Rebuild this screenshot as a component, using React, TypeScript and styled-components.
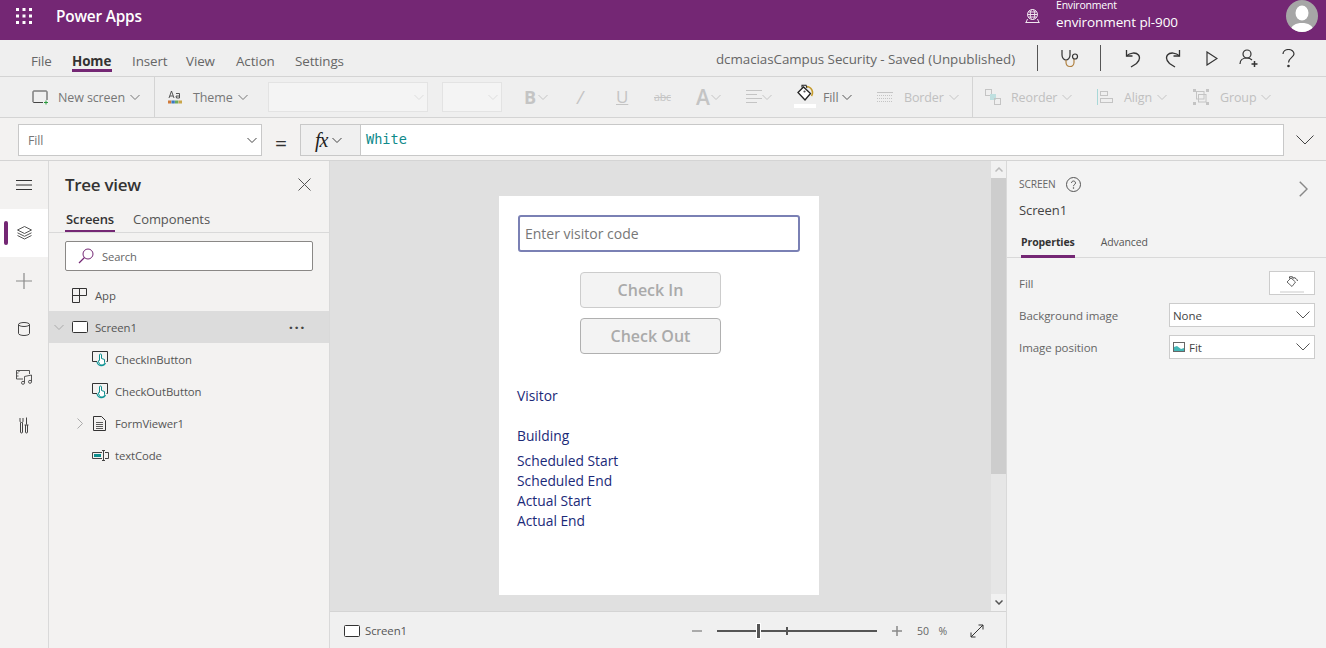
import React from "react";
import styled, { createGlobalStyle } from "styled-components";

const Global = createGlobalStyle`
  html, body { margin: 0; padding: 0; width: 1326px; height: 648px; overflow: hidden; background: #f3f2f1; }
  * { box-sizing: border-box; }
  body { font-family: "Open Sans", "Noto Sans", sans-serif; color: #333; }
`;

const Page = styled.div`
  width: 1326px; height: 648px; display: flex; flex-direction: column; overflow: hidden; letter-spacing: -0.1px;
`;
const Header = styled.header`
  height: 40px; flex: none; background: #742774; color: #fff; display: flex; align-items: center; padding: 0 0 8px 16px;
`;
const Brand = styled.div`
  font-size: 15.4px; font-weight: 600; margin-left: 24px; letter-spacing: -0.2px;
`;
const EnvBlock = styled.div`
  margin-left: auto; display: flex; align-items: center; height: 32px;
`;
const EnvText = styled.div`
  margin-left: 15px; width: 230px; display: flex; flex-direction: column; height: 32px; padding-top: 1px;
`;
const EnvLabel = styled.span`
  font-size: 10.5px; line-height: 9px; letter-spacing: -0.2px;
`;
const EnvName = styled.span`
  font-size: 13.5px; line-height: 18px; margin-top: 3px; letter-spacing: -0.1px;
`;
const Avatar = styled.div`
  width: 32px; height: 32px; border-radius: 50%; background: #a6a6a6; overflow: hidden; margin-right: 8px;
`;
const MenuRow = styled.nav`
  height: 37px; flex: none; background: #efefef; border-bottom: 1px solid #d4d4d4; display: flex; align-items: center; padding-left: 31px;
`;
const MenuTab = styled.span<{ $active?: boolean; $w: number }>`
  width: ${p => p.$w}px; font-size: 13.4px; line-height: 18px; position: relative; flex: none;
  font-weight: ${p => (p.$active ? 700 : 400)};
  color: ${p => (p.$active ? "#333" : "#666")};
  margin-top: 6px;
  ${p => p.$active && `&::after { content: ""; position: absolute; left: 0; width: 40px; top: 17px; height: 3px; background: #742774; }`}
`;
const DocTitle = styled.span`
  margin-left: auto; font-size: 13.35px; color: #666; width: 300px; letter-spacing: -0.04px; white-space: nowrap; margin-top: 1px;
`;
const MenuIcons = styled.div`
  display: flex; align-items: center; height: 26px; width: 310px;
`;
const VBar = styled.span<{ $ml: number }>`
  width: 1px; height: 26px; background: #555; margin-left: ${p => p.$ml}px; flex: none;
`;
const IconSlot = styled.span<{ $ml: number }>`
  margin-left: ${p => p.$ml}px; display: inline-flex; flex: none;
`;
const Toolbar = styled.div`
  height: 41px; flex: none; background: #efefef; border-bottom: 1px solid #d4d4d4; display: flex; align-items: center; padding: 0 0 0 32px;
`;
const ToolItem = styled.div<{ $w: number; $ml?: number; $dim?: boolean }>`
  width: ${p => p.$w}px; margin-left: ${p => p.$ml ?? 0}px; flex: none; display: flex; align-items: center;
  font-size: 12.5px; height: 24px; color: ${p => (p.$dim ? "#c0c0c0" : "#777")};
  letter-spacing: -0.12px; white-space: nowrap;
`;
const ToolLabel = styled.span<{ $ml: number }>`
  margin-left: ${p => p.$ml}px;
`;
const ToolSep = styled.span<{ $ml?: number }>`
  width: 1px; height: 40px; background: #d4d4d4; flex: none; margin-left: ${p => p.$ml ?? 0}px;
`;
const DisabledSelect = styled.div<{ $w: number; $ml: number }>`
  width: ${p => p.$w}px; height: 30px; margin-left: ${p => p.$ml}px; flex: none; background: #f4f4f4; border: 1px solid #e3e3e3;
  display: flex; align-items: center; justify-content: flex-end; padding-right: 3px;
`;
const FillStack = styled.span`
  width: 22px; margin-left: -4px; flex: none; display: flex; flex-direction: column; align-items: center; height: 26px; gap: 2px;
`;
const FillBar = styled.span`
  width: 22px; height: 4px; background: #fff; flex: none;
`;
const FormulaBar = styled.div`
  height: 43px; flex: none; background: #f3f2f1; border-bottom: 1px solid #d4d4d4; display: flex; align-items: flex-start; padding: 6px 0 0 18px;
`;
const PropSelect = styled.div`
  width: 244px; height: 32px; background: #fff; border: 1px solid #c8c8c8; display: flex; align-items: center; padding: 0 4px 0 9px; justify-content: space-between;
  font-size: 12.4px; color: #777;
`;
const EqualSign = styled.span`
  width: 38px; flex: none; font-size: 21px; line-height: 32px; color: #333; text-align: center; padding-top: 3px;
`;
const FxBox = styled.div`
  width: 61px; height: 32px; flex: none; border: 1px solid #c8c8c8; background: #f0f0f0; display: flex; align-items: center; padding-left: 14px; gap: 5px;
`;
const FxText = styled.span`
  font-family: "Liberation Serif", serif; font-style: italic; font-size: 20px; color: #222; line-height: 24px; letter-spacing: -1px;
`;
const FormulaInput = styled.div`
  width: 923px; height: 32px; flex: none; background: #fff; border: 1px solid #c8c8c8; border-left: none; display: flex; align-items: center; padding: 0 0 2px 5px;
  font-family: "DejaVu Sans Mono", "Liberation Mono", monospace; font-size: 13.6px; color: #0e8a8a; letter-spacing: 0;
`;
const Expand = styled.span`
  margin-left: 12px; margin-top: 11px; display: inline-flex;
`;
const Main = styled.div`
  flex: 1; min-height: 0; display: flex; background: #f3f2f1;
`;
const Rail = styled.aside`
  width: 49px; flex: none; border-right: 1px solid #d9d9d9; display: flex; flex-direction: column;
`;
const RailBtn = styled.div<{ $active?: boolean; $h: number }>`
  height: ${p => p.$h}px; display: flex; align-items: center; justify-content: center; position: relative; flex: none;
  ${p => p.$active && `background: #fff; &::before { content: ""; position: absolute; left: 4px; top: 12px; width: 4px; height: 24px; border-radius: 2px; background: #742774; }`}
`;
const TreePanel = styled.section`
  width: 280px; flex: none; display: flex; flex-direction: column; background: #f3f2f1;
`;
const TreeHead = styled.div`
  height: 47px; padding: 0 18px 0 16px; display: flex; align-items: center; justify-content: space-between; flex: none;
`;
const TreeTitle = styled.h2`
  margin: 0; font-size: 17px; font-weight: 600; color: #333; letter-spacing: -0.3px;
`;
const TabStrip = styled.div`
  height: 25px; flex: none; border-bottom: 1px solid #d9d9d9; display: flex; padding-left: 16px; gap: 17px;
`;
const TreeTab = styled.span<{ $active?: boolean }>`
  font-size: 13px; line-height: 22px; height: 24px; padding: 0 1px; color: ${p => (p.$active ? "#333" : "#555")}; font-weight: ${p => (p.$active ? 600 : 400)};
  border-bottom: ${p => (p.$active ? "2px solid #742774" : "none")}; letter-spacing: -0.1px;
`;
const SearchBox = styled.div`
  width: 248px; height: 30px; margin: 8px 0 8px 16px; flex: none; background: #fff; border: 1px solid #8a8886; border-radius: 2px; display: flex; align-items: center; padding-left: 12px; gap: 8px;
  font-size: 11.2px; color: #666;
`;
const TreeRow = styled.div<{ $sel?: boolean; $pad: number }>`
  height: 32px; flex: none; display: flex; align-items: center; padding-left: ${p => p.$pad}px; font-size: 11.35px; color: #555; background: ${p => (p.$sel ? "#dcdcdc" : "transparent")}; letter-spacing: -0.1px;
`;
const RowGlyph = styled.span<{ $w: number }>`
  width: ${p => p.$w}px; flex: none; display: inline-flex; align-items: center;
`;
const RowMore = styled.span`
  margin-left: auto; margin-right: 23px; font-size: 15px; letter-spacing: 1.5px; line-height: 10px; color: #444; margin-top: -8px; font-weight: 700;
`;
const CanvasCol = styled.section`
  width: 678px; flex: none; display: flex; flex-direction: column; border-left: 1px solid #d9d9d9; border-right: 1px solid #d9d9d9;
`;
const CanvasArea = styled.div`
  height: 450px; flex: none; display: flex; background: #e0e0e0;
`;
const CanvasInner = styled.div`
  width: 661px; flex: none; padding: 35px 0 0 169px;
`;
const AppScreen = styled.div`
  width: 320px; height: 399px; background: #fff; display: flex; flex-direction: column; padding: 19px 0 0 18px;
  font-family: "Open Sans", sans-serif;
`;
const VisitorInput = styled.div`
  width: 282px; height: 37px; margin-left: 1px; flex: none; border: 2px solid #7a80b4; border-radius: 3px; display: flex; align-items: center; padding-left: 5px; font-size: 14px; color: #777; letter-spacing: 0;
`;
const AppButton = styled.div<{ $mt: number; $dark?: boolean }>`
  width: 141px; height: 36px; margin: ${p => p.$mt}px 0 0 63px; flex: none; border: 1px solid ${p => (p.$dark ? "#b0b0b0" : "#ccc")}; border-radius: 4px; background: #f3f3f3; display: flex; align-items: center; justify-content: center;
  font-size: 16px; font-weight: 600; color: #aaa; letter-spacing: 0;
`;
const FieldLabel = styled.div<{ $mt: number }>`
  margin-top: ${p => p.$mt}px; font-size: 13.8px; line-height: 20px; color: #1b2a78; letter-spacing: 0; flex: none;
`;
const ScrollBar = styled.div`
  width: 15px; flex: none; display: flex; flex-direction: column; background: #e6e6e6; align-items: center;
`;
const ScrollArrow = styled.div`
  height: 17px; width: 15px; flex: none; background: #f1f1f1; display: flex; align-items: center; justify-content: center;
`;
const ScrollThumb = styled.div`
  height: 296px; width: 15px; flex: none; background: #cdcdcd;
`;
const ScrollRest = styled.div`
  flex: 1;
`;
const StatusBar = styled.div`
  height: 37px; flex: none; border-top: 1px solid #d4d4d4; background: #f0f0f0; display: flex; align-items: center; padding: 1px 0 0 14px; font-size: 11.4px; color: #555;
`;
const StatusName = styled.span`
  margin-left: 5px; width: 327px; flex: none;
`;
const ZoomTrack = styled.div`
  width: 160px; height: 16px; margin-left: 15px; position: relative; flex: none; display: flex; align-items: center;
`;
const ZoomLine = styled.div`
  width: 100%; height: 2px; background: #555;
`;
const ZoomTick = styled.span<{ $x: number; $h: number; $w: number }>`
  position: absolute; left: ${p => p.$x}px; top: ${p => (16 - p.$h) / 2}px; height: ${p => p.$h}px; width: ${p => p.$w}px; background: #555; outline: ${p => (p.$w > 2 ? "1px solid #fff" : "none")};
`;
const ZoomValue = styled.span`
  margin-left: 15px; font-size: 10.5px; color: #666; width: 53px; flex: none; letter-spacing: 0; word-spacing: 2px;
`;
const PropsPanel = styled.aside`
  flex: 1; background: #f3f3f3; display: flex; flex-direction: column;
`;
const PropsHead = styled.div`
  height: 58px; flex: none; padding: 14px 15px 0 12px; position: relative;
`;
const ScreenKind = styled.div`
  display: flex; align-items: center; gap: 10px; font-size: 10.2px; color: #666; height: 18px; letter-spacing: -0.1px;
`;
const ScreenTitle = styled.div`
  font-size: 13px; color: #444; margin-top: 8px; line-height: 18px; letter-spacing: -0.1px;
`;
const PanelChevron = styled.span`
  position: absolute; right: 18px; top: 20px; display: inline-flex;
`;
const PropsTabs = styled.div`
  height: 39px; flex: none; border-bottom: 1px solid #d9d9d9; display: flex; padding-left: 14px; gap: 26px;
`;
const PropTab = styled.span<{ $active?: boolean }>`
  font-size: 10.5px; height: 39px; line-height: 46px; color: ${p => (p.$active ? "#333" : "#555")}; font-weight: ${p => (p.$active ? 700 : 400)}; border-bottom: ${p => (p.$active ? "3px solid #742774" : "none")}; letter-spacing: -0.1px;
`;
const PropsBody = styled.div`
  display: flex; flex-direction: column; padding: 13px 11px 0 12px; gap: 8px;
`;
const PropRow = styled.div`
  display: flex; align-items: center; justify-content: space-between; height: 24px; font-size: 11.5px; color: #666; letter-spacing: -0.05px;
`;
const FillSwatch = styled.div`
  width: 46px; height: 24px; background: #fff; border: 1px solid #ccc; display: flex; flex-direction: column; align-items: center; padding-top: 4px; position: relative;
`;
const FillLine = styled.span`
  width: 24px; height: 2px; background: #e4e4e4; position: absolute; bottom: 1px; left: 10px;
`;
const PropDrop = styled.div`
  width: 146px; height: 24px; background: #fff; border: 1px solid #ccc; display: flex; align-items: center; padding: 0 4px 0 3px; font-size: 11.5px; color: #444; gap: 4px;
`;
const DropChevron = styled.span`
  margin-left: auto; display: inline-flex;
`;

type Ic = { c?: string; s?: number };
const Chevron = ({ c = "#777", s = 10 }: Ic) => (
  <svg width={s} height={s} viewBox="0 0 10 10" fill="none" stroke={c} strokeWidth="1"><path d="M0.5 3 L5 7.5 L9.5 3" /></svg>
);
const Dim = "#c4c4c4";

const Waffle = () => (
  <svg width="16" height="16" viewBox="0 0 16 16" fill="#fff">
    {[0, 6.5, 13].flatMap(x => [0, 6.5, 13].map(y => <rect key={`${x}-${y}`} x={x} y={y} width="3" height="3" />))}
  </svg>
);
const Globe = () => (
  <svg width="17" height="16" viewBox="0 0 17 16" fill="none" stroke="#f0e6ef" strokeWidth="1">
    <circle cx="8.5" cy="6.5" r="5" /><ellipse cx="8.5" cy="6.5" rx="2.2" ry="5" /><path d="M3.5 6.5h10M4.3 4h8.4M4.3 9h8.4M2 14.5l1.5-3.5M15 14.5 13.5 11M1.5 14.5h14" />
  </svg>
);
const AvatarArt = () => (
  <svg width="32" height="32" viewBox="0 0 32 32" fill="#fff">
    <ellipse cx="16" cy="13" rx="6.5" ry="7.5" /><path d="M4 32c1-7 6-9 12-9s11 2 12 9z" />
  </svg>
);
const Stetho = () => (
  <svg width="20" height="20" viewBox="0 0 20 20" fill="none" stroke="#333" strokeWidth="1.2">
    <path d="M2 2v5c0 3 2 5 4 5s4-2 4-5V2" /><path d="M6 12v2c0 3 2 4.5 4 4.5s4-1.5 4-4V11" stroke="#b08040" /><circle cx="15" cy="8.5" r="2.5" />
  </svg>
);
const Undo = () => (
  <svg width="16" height="19" viewBox="0 0 16 19" fill="none" stroke="#333" strokeWidth="1.3"><path d="M1.5 1v6h6" /><path d="M1.5 7C5 3.5 11 3 13.5 6c2.5 3.5 0 6.5-2 8.5L6 18" /></svg>
);
const Redo = () => (
  <svg width="16" height="19" viewBox="0 0 16 19" fill="none" stroke="#333" strokeWidth="1.3"><path d="M14.5 1v6h-6" /><path d="M14.5 7C11 3.5 5 3 2.5 6c-2.5 3.5 0 6.5 2 8.5L10 18" /></svg>
);
const Play = () => (
  <svg width="12" height="15" viewBox="0 0 12 15" fill="none" stroke="#333" strokeWidth="1.2"><path d="M1 1v13l10-6.5z" /></svg>
);
const Share = () => (
  <svg width="20" height="19" viewBox="0 0 20 19" fill="none" stroke="#333" strokeWidth="1.2">
    <circle cx="8" cy="5" r="4" /><path d="M1 15c0-4 3-6 7-6 2 0 3.5.5 5 2" /><path d="M15.5 12v6M12.5 15h6" strokeWidth="1.5" />
  </svg>
);
const Help = () => (
  <svg width="13" height="19" viewBox="0 0 13 19" fill="none" stroke="#333" strokeWidth="1.2">
    <path d="M1 5c0-3 2.5-4.5 5.5-4.5S12 2.5 12 5c0 3-5.5 4-5.5 8.5" /><circle cx="6.5" cy="17" r=".7" fill="#333" />
  </svg>
);
const NewScreenIcon = () => (
  <svg width="17" height="15" viewBox="0 0 17 15" fill="none"><path d="M11 12.5H1.5a1 1 0 0 1-.5-.5V1.5a1 1 0 0 1 .5-.5h13a1 1 0 0 1 .5.5V10" stroke="#444" /><path d="M14 10.5v4M12 12.5h4" stroke="#2b9a3e" /></svg>
);
const ThemeIcon = () => (
  <svg width="14" height="14" viewBox="0 0 14 14">
    <path d="M1 8 3.5 1 6 8M2 6h3" fill="none" stroke="#444" strokeWidth=".9" /><path d="M8 3.5h3.5V8H8.5L8 6h3.5" fill="none" stroke="#444" strokeWidth=".9" />
    <rect y="10.5" width="3.3" height="3" fill="#d07a3a" /><rect x="3.5" y="10.5" width="3.3" height="3" fill="#3b78c2" /><rect x="7" y="10.5" width="3.3" height="3" fill="#6cab5c" /><rect x="10.5" y="10.5" width="3.5" height="3" fill="#c9a64a" />
  </svg>
);
const BucketIcon = () => (
  <svg width="17" height="18" viewBox="0 0 17 18" fill="none">
    <path d="M1 8.5 6.5 3l7 6.5L8 16z" fill="#fff" stroke="#222" strokeWidth="1.3" />
    <path d="M5 3.5V1.2h4l1 3" stroke="#222" strokeWidth="1.1" />
    <circle cx="7.5" cy="7.5" r="1.1" fill="#555" />
    <path d="M10 2.5c3 .5 5 2.5 5.500 5.500.2 1.500-.3 3-1 4" stroke="#c49a2a" strokeWidth="1.6" />
  </svg>
);
const BucketSmall = () => (
  <svg width="13" height="12" viewBox="0 0 13 12" fill="none"><path d="M1 6 5 2l4.500 4L6 10.500z" stroke="#555" strokeWidth=".9" /><path d="M3.500 2.500V.8h3l.8 2M7.500 1.500c2 .3 3.500 1.500 4 3.500" stroke="#333" strokeWidth=".9" /></svg>
);
const AlignTextIcon = () => (
  <svg width="16" height="14" viewBox="0 0 16 14" stroke={Dim}><path d="M0 .5h16M0 4.500h11M0 8.500h16M0 12.500h11" /></svg>
);
const BorderIcon = () => (
  <svg width="16" height="10" viewBox="0 0 16 10" stroke={Dim}><path d="M0 .5h16" /><path d="M0 3.500h16M0 6.500h16M0 9.500h16" strokeDasharray="1 1" /></svg>
);
const ReorderIcon = () => (
  <svg width="16" height="16" viewBox="0 0 16 16"><rect x=".5" y=".5" width="6" height="6" fill="none" stroke={Dim} /><rect x="5" y="5" width="6" height="6" fill="#bfe0e0" /><rect x="9.5" y="9.5" width="6" height="6" fill="none" stroke={Dim} /></svg>
);
const AlignIcon = () => (
  <svg width="16" height="16" viewBox="0 0 16 16" fill="none"><path d="M.5 0v16" stroke="#a8d8d8" /><rect x="3.5" y="2.5" width="7" height="4" stroke={Dim} /><rect x="3.5" y="9.5" width="12" height="4" stroke={Dim} /></svg>
);
const GroupIcon = () => (
  <svg width="16" height="16" viewBox="0 0 16 16" fill="none" stroke={Dim}>
    <rect x=".5" y=".5" width="2" height="2" fill={Dim} /><rect x="13.5" y=".5" width="2" height="2" fill={Dim} /><rect x=".5" y="13.5" width="2" height="2" fill={Dim} /><rect x="13.5" y="13.5" width="2" height="2" fill={Dim} />
    <rect x="3.5" y="2.5" width="7.5" height="7.5" /><rect x="5.5" y="5.5" width="7.5" height="7.5" />
  </svg>
);
const Hamburger = () => (
  <svg width="16" height="10" viewBox="0 0 16 10" stroke="#333"><path d="M0 .5h16M0 5h16M0 9.500h16" /></svg>
);
const Layers = () => (
  <svg width="15" height="14" viewBox="0 0 15 14" fill="none" stroke="#555" strokeWidth="1"><path d="M7.500.5 14.500 4l-7 3.500L.5 4z" /><path d="M.5 6.800l7 3.500 7-3.500M.5 9.500l7 3.500 7-3.500" /></svg>
);
const Plus = () => (
  <svg width="16" height="16" viewBox="0 0 16 16" stroke="#8a8a8a" strokeWidth="1.2"><path d="M8 0v16M0 8h16" /></svg>
);
const Cylinder = () => (
  <svg width="12" height="14" viewBox="0 0 12 14" fill="none" stroke="#444"><ellipse cx="6" cy="2.5" rx="5.5" ry="2" /><path d="M.5 2.500v9c0 1 2.500 2 5.500 2s5.500-1 5.500-2v-9" /></svg>
);
const Media = () => (
  <svg width="17" height="15" viewBox="0 0 17 15" fill="none" stroke="#444" strokeWidth=".9"><path d="M7 9H.5V.5h13V4" /><path d="M.5 3h2M.5 6h2M3 .5v1.500" /><path d="M8.500 12.500V6.500l7-1.500v6.500" /><circle cx="7" cy="12.8" r="1.5" /><circle cx="14" cy="11.8" r="1.5" /></svg>
);
const Tools = () => (
  <svg width="10" height="17" viewBox="0 0 10 17" fill="none" stroke="#444" strokeWidth="1">
    <path d="M1 1v3c0 .8.500 1.300 1.500 1.500S4 4.800 4 4V1" /><path d="M1.500 5.500V15a1 1 0 0 0 2 0V5.500" />
    <path d="M7.500.5v7M5.500 8h4" /><path d="M6.500 8v7a1 1 0 0 0 2 0V8" />
  </svg>
);
const Close = () => (
  <svg width="13" height="13" viewBox="0 0 13 13" stroke="#555"><path d="M.5.5l12 12M12.500.5l-12 12" /></svg>
);
const Lens = () => (
  <svg width="16" height="16" viewBox="0 0 16 16" fill="none" stroke="#742774"><circle cx="10" cy="6" r="5" /><path d="M6.500 9.500 1 15" strokeWidth="1.2" /></svg>
);
const AppIcon = () => (
  <svg width="15" height="15" viewBox="0 0 15 15" fill="none" stroke="#333"><path d="M.5 .5H14.500V7.500H.5M.5 .5V14.500H7.500V.5" /></svg>
);
const ScreenIcon = ({ w = 16 }: { w?: number }) => (
  <svg width={w} height={w * 0.75} viewBox="0 0 16 12" fill="#fff" stroke="#333"><rect x=".5" y=".5" width="15" height="11" rx="1" /></svg>
);
const ButtonIcon = () => (
  <svg width="17" height="16" viewBox="0 0 17 16" fill="none">
    <path d="M.5.5h15v10h-1M5 10.500H.5V.5" stroke="#333" />
    <path d="M5 11a4.500 4.500 0 0 0 8.500 1" stroke="#0f9a9a" strokeWidth="1.2" />
    <path d="M7.500 9.500V4a1 1 0 0 1 2 0v3.500l3 1v3c0 1.500-1 2.500-2.500 2.500s-2-.5-2.500-1.500L6 10z" fill="#fff" stroke="#0f8f8f" strokeWidth="1" />
  </svg>
);
const FormIcon = () => (
  <svg width="13" height="15" viewBox="0 0 13 15" fill="none" stroke="#333"><path d="M.5.500h8l4 4v10H.5z" /><path d="M3 6.500h7M3 8.500h7M3 10.500h7M3 12.500h7" strokeWidth=".8" /></svg>
);
const TextIcon = () => (
  <svg width="17" height="11" viewBox="0 0 17 11" fill="none" stroke="#444"><path d="M10 8.500H.5v-6H10" /><rect x="2" y="4" width="7" height="3" fill="#0f8f8f" stroke="none" /><path d="M10 .5h3M10 10.500h3M11.500 .5v10M13 2.500h3.500v6H13" /></svg>
);
const Right = ({ s = 11, c = "#888" }: Ic) => (
  <svg width={s * 0.55} height={s} viewBox="0 0 6 11" fill="none" stroke={c}><path d="M.5.5l5 5-5 5" /></svg>
);
const HelpRing = () => (
  <svg width="15" height="15" viewBox="0 0 15 15" fill="none" stroke="#555"><circle cx="7.5" cy="7.5" r="7" /><path d="M5.500 6c0-1.300 1-2 2-2s2 .7 2 2c0 1.500-2 1.500-2 3.200" /><circle cx="7.5" cy="11" r=".4" /></svg>
);
const ImgIcon = () => (
  <svg width="12" height="10" viewBox="0 0 12 10"><rect x=".5" y=".5" width="11" height="9" fill="#fff" stroke="#666" /><path d="M1 9V5l3-1 4 3 3-1v3z" fill="#43b7b7" /></svg>
);
const ExpandIcon = () => (
  <svg width="14" height="14" viewBox="0 0 14 14" fill="none" stroke="#333"><path d="M1 13 13 1M8.500 1H13v4.500M1 8.500V13h4.500" /></svg>
);
const BigChevron = () => (
  <svg width="14" height="8" viewBox="0 0 14 8" fill="none" stroke="#555"><path d="M.5.5 7 7 13.500.5" /></svg>
);

function Tool({ w, ml, dim, label, gap, children, chev = 5 }: { w: number; ml?: number; dim?: boolean; label?: string; gap?: number; children?: React.ReactNode; chev?: number }) {
  return (
    <ToolItem $w={w} $ml={ml} $dim={dim}>
      {children}
      {label && <ToolLabel $ml={gap ?? 10}>{label}</ToolLabel>}
      <IconSlot $ml={chev}><Chevron c={dim ? Dim : "#777"} /></IconSlot>
    </ToolItem>
  );
}

const DimGlyph = styled.span<{ $size: number; $weight?: number; $italic?: boolean; $under?: boolean; $strike?: boolean }>`
  font-size: ${p => p.$size}px; font-weight: ${p => p.$weight ?? 400}; color: ${Dim}; line-height: 24px;
  font-style: ${p => (p.$italic ? "italic" : "normal")};
  text-decoration: ${p => (p.$under ? "underline" : p.$strike ? "line-through" : "none")};
`;

export default function App() {
  return (
    <Page>
      <Global />
      <Header>
        <Waffle />
        <Brand>Power Apps</Brand>
        <EnvBlock>
          <Globe />
          <EnvText>
            <EnvLabel>Environment</EnvLabel>
            <EnvName>environment pl-900</EnvName>
          </EnvText>
          <Avatar><AvatarArt /></Avatar>
        </EnvBlock>
      </Header>
      <MenuRow>
        <MenuTab $w={41}>File</MenuTab>
        <MenuTab $w={60} $active>Home</MenuTab>
        <MenuTab $w={54}>Insert</MenuTab>
        <MenuTab $w={50}>View</MenuTab>
        <MenuTab $w={59}>Action</MenuTab>
        <MenuTab $w={80}>Settings</MenuTab>
        <DocTitle>dcmaciasCampus Security - Saved (Unpublished)</DocTitle>
        <MenuIcons>
          <VBar $ml={21} />
          <IconSlot $ml={22}><Stetho /></IconSlot>
          <VBar $ml={20} />
          <IconSlot $ml={24}><Undo /></IconSlot>
          <IconSlot $ml={24}><Redo /></IconSlot>
          <IconSlot $ml={25}><Play /></IconSlot>
          <IconSlot $ml={21}><Share /></IconSlot>
          <IconSlot $ml={23}><Help /></IconSlot>
        </MenuIcons>
      </MenuRow>
      <Toolbar>
        <Tool w={122} label="New screen" gap={9}><NewScreenIcon /></Tool>
        <ToolSep />
        <Tool w={100} ml={13} label="Theme" gap={11}><ThemeIcon /></Tool>
        <DisabledSelect $w={160} $ml={0}><Chevron c="#ddd" /></DisabledSelect>
        <DisabledSelect $w={60} $ml={14}><Chevron c="#ddd" /></DisabledSelect>
        <Tool w={53} ml={22} dim chev={2}><DimGlyph $size={18} $weight={700}>B</DimGlyph></Tool>
        <ToolItem $w={39} $dim><DimGlyph $size={18} $italic>/</DimGlyph></ToolItem>
        <ToolItem $w={38} $dim><DimGlyph $size={17} $under>U</DimGlyph></ToolItem>
        <ToolItem $w={42} $dim><DimGlyph $size={10.5} $strike>abc</DimGlyph></ToolItem>
        <Tool w={50} dim chev={1}><DimGlyph $size={21} $weight={600}>A</DimGlyph></Tool>
        <Tool w={52} dim chev={0}><AlignTextIcon /></Tool>
        <ToolItem $w={79}>
          <FillStack><BucketIcon /><FillBar /></FillStack>
          <ToolLabel $ml={7}>Fill</ToolLabel>
          <IconSlot $ml={4}><Chevron c="#555" /></IconSlot>
        </ToolItem>
        <Tool w={95} dim label="Border" gap={11}><BorderIcon /></Tool>
        <ToolSep />
        <Tool w={112} ml={12} dim label="Reorder"><ReorderIcon /></Tool>
        <Tool w={96} dim label="Align" gap={11}><AlignIcon /></Tool>
        <Tool w={90} dim label="Group" gap={11}><GroupIcon /></Tool>
      </Toolbar>
      <FormulaBar>
        <PropSelect>Fill<Chevron c="#444" /></PropSelect>
        <EqualSign>=</EqualSign>
        <FxBox><FxText>fx</FxText><Chevron c="#444" /></FxBox>
        <FormulaInput>White</FormulaInput>
        <Expand><svg width="18" height="10" viewBox="0 0 18 10" fill="none" stroke="#444"><path d="M.5.5 9 9 17.500.5" /></svg></Expand>
      </FormulaBar>
      <Main>
        <Rail>
          <RailBtn $h={48}><Hamburger /></RailBtn>
          <RailBtn $h={48} $active><Layers /></RailBtn>
          <RailBtn $h={48}><Plus /></RailBtn>
          <RailBtn $h={48}><Cylinder /></RailBtn>
          <RailBtn $h={48}><Media /></RailBtn>
          <RailBtn $h={48}><Tools /></RailBtn>
        </Rail>
        <TreePanel>
          <TreeHead><TreeTitle>Tree view</TreeTitle><Close /></TreeHead>
          <TabStrip>
            <TreeTab $active>Screens</TreeTab>
            <TreeTab>Components</TreeTab>
          </TabStrip>
          <SearchBox><Lens />Search</SearchBox>
          <TreeRow $pad={23}><RowGlyph $w={23}><AppIcon /></RowGlyph>App</TreeRow>
          <TreeRow $pad={5} $sel>
            <RowGlyph $w={18}><Chevron c="#aaa" /></RowGlyph>
            <RowGlyph $w={23}><ScreenIcon /></RowGlyph>Screen1<RowMore>...</RowMore>
          </TreeRow>
          <TreeRow $pad={43}><RowGlyph $w={23}><ButtonIcon /></RowGlyph>CheckInButton</TreeRow>
          <TreeRow $pad={43}><RowGlyph $w={23}><ButtonIcon /></RowGlyph>CheckOutButton</TreeRow>
          <TreeRow $pad={28}>
            <RowGlyph $w={16}><Right c="#aaa" /></RowGlyph>
            <RowGlyph $w={22}><FormIcon /></RowGlyph>FormViewer1
          </TreeRow>
          <TreeRow $pad={43}><RowGlyph $w={23}><TextIcon /></RowGlyph>textCode</TreeRow>
        </TreePanel>
        <CanvasCol>
          <CanvasArea>
            <CanvasInner>
              <AppScreen>
                <VisitorInput>Enter visitor code</VisitorInput>
                <AppButton $mt={20}>Check In</AppButton>
                <AppButton $mt={10} $dark>Check Out</AppButton>
                <FieldLabel $mt={32}>Visitor</FieldLabel>
                <FieldLabel $mt={20}>Building</FieldLabel>
                <FieldLabel $mt={5}>Scheduled Start</FieldLabel>
                <FieldLabel $mt={0}>Scheduled End</FieldLabel>
                <FieldLabel $mt={0}>Actual Start</FieldLabel>
                <FieldLabel $mt={0}>Actual End</FieldLabel>
              </AppScreen>
            </CanvasInner>
            <ScrollBar>
              <ScrollArrow><svg width="8" height="5" viewBox="0 0 8 5" fill="none" stroke="#bbb" strokeWidth="1.5"><path d="M.5 4.500 4 1l3.500 3.500" /></svg></ScrollArrow>
              <ScrollThumb />
              <ScrollRest />
              <ScrollArrow><svg width="8" height="5" viewBox="0 0 8 5" fill="none" stroke="#555" strokeWidth="1.5"><path d="M.5.5 4 4 7.500.5" /></svg></ScrollArrow>
            </ScrollBar>
          </CanvasArea>
          <StatusBar>
            <ScreenIcon w={16} />
            <StatusName>Screen1</StatusName>
            <svg width="10" height="2" viewBox="0 0 10 2"><rect width="10" height="2" fill="#aaa" /></svg>
            <ZoomTrack>
              <ZoomLine />
              <ZoomTick $x={40} $h={14} $w={3} />
              <ZoomTick $x={69} $h={8} $w={1.5} />
            </ZoomTrack>
            <IconSlot $ml={15}><svg width="10" height="10" viewBox="0 0 10 10" stroke="#888" strokeWidth="1.5"><path d="M5 0v10M0 5h10" /></svg></IconSlot>
            <ZoomValue>50 &nbsp;%</ZoomValue>
            <ExpandIcon />
          </StatusBar>
        </CanvasCol>
        <PropsPanel>
          <PropsHead>
            <ScreenKind>SCREEN <HelpRing /></ScreenKind>
            <ScreenTitle>Screen1</ScreenTitle>
            <PanelChevron><Right s={16} c="#888" /></PanelChevron>
          </PropsHead>
          <PropsTabs>
            <PropTab $active>Properties</PropTab>
            <PropTab>Advanced</PropTab>
          </PropsTabs>
          <PropsBody>
            <PropRow>Fill<FillSwatch><BucketSmall /><FillLine /></FillSwatch></PropRow>
            <PropRow>Background image<PropDrop>None<DropChevron><BigChevron /></DropChevron></PropDrop></PropRow>
            <PropRow>Image position<PropDrop><ImgIcon />Fit<DropChevron><BigChevron /></DropChevron></PropDrop></PropRow>
          </PropsBody>
        </PropsPanel>
      </Main>
    </Page>
  );
}
